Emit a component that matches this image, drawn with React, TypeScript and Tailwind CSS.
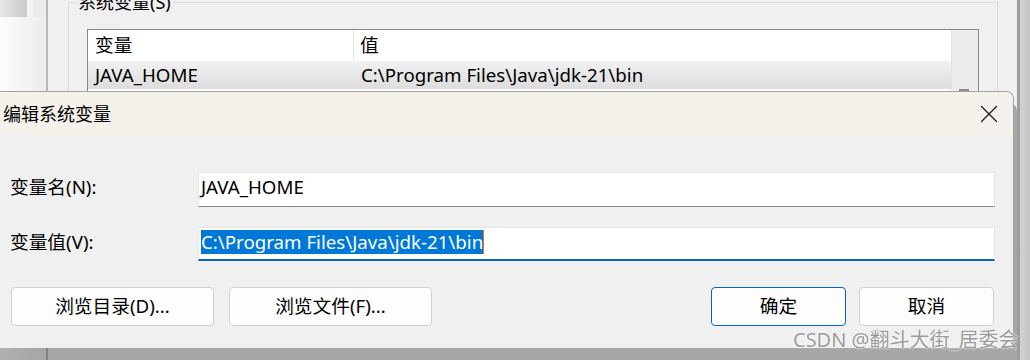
import { X } from "lucide-react";

function EnvList() {
  return (
    <div className="ml-[18px] mt-[15px] flex h-[200px] w-[892px] border border-[#828790] bg-white">
      <div className="flex flex-1 flex-col">
        {/* header */}
        <div className="flex h-[31px] items-center bg-white">
          <div className="flex h-full w-[266px] items-center border-r border-[#e5e5e5] pl-[7px]">变量</div>
          <div className="pl-[6px]">值</div>
        </div>
        {/* row */}
        <div className="flex h-[28px] items-center bg-gradient-to-b from-[#f1f1f1] to-[#dddddd]">
          <div className="w-[266px] pl-[7px]">JAVA_HOME</div>
          <div className="pl-[7px]">C:\Program Files\Java\jdk-21\bin</div>
        </div>
      </div>
      <div className="w-[27px] border-l border-[#e3e3e3] bg-[#ececec]">
        <div className="ml-[7px] mt-[59px] h-[3px] w-[10px] bg-[#8a8a8a]" />
      </div>
    </div>
  );
}

function BackWindow() {
  return (
    <div className="flex h-full w-full">
      {/* left strip */}
      <div className="flex w-[46px] flex-col">
        <div className="flex h-[17px]">
          <div className="w-[27px] bg-gradient-to-r from-[#e6e6e6] to-[#c9c9c9]" />
          <div className="w-[6px] bg-[#f3f3f3]" />
          <div className="flex-1 bg-[#ebebeb]" />
        </div>
        <div className="flex-1 bg-gradient-to-r from-[#fcfcfc] to-[#ececec]" />
      </div>
      <div className="w-[2px] bg-[#b8b8b8]" />

      {/* main panel */}
      <div className="w-[969px] bg-[#f0f0f0] pl-[20px]">
        <fieldset className="-mt-[10px] h-[300px] w-[930px] border border-[#dcdcdc]">
          <legend className="ml-[7px] px-[2px] text-[18px] leading-[24px]">系统变量(S)</legend>
          <EnvList />
        </fieldset>
      </div>

      {/* right edge */}
      <div className="w-[3px] bg-[#9d9d9d]" />
      <div className="flex-1 bg-gradient-to-r from-[#d2d2d2] to-[#c6c6c6]" />
    </div>
  );
}

function Btn({ label, w, primary }: { label: string; w: string; primary?: boolean }) {
  return (
    <button
      className={
        "h-[39px] rounded-[4px] border bg-[#fdfdfd] text-black " +
        w +
        (primary ? " border-[#0067c0]" : " border-[#d1d1d1]")
      }
    >
      {label}
    </button>
  );
}

function EditDialog() {
  return (
    <div className="absolute left-[-30px] top-[91px] flex h-[257px] w-[1044px] flex-col overflow-hidden rounded-tr-[8px] border-r border-t border-[#a3a3a3] bg-[#f0f0f0] shadow-[3px_12px_0_0_rgba(0,0,0,0.3)]">
      {/* title bar */}
      <div className="flex h-[44px] items-center justify-between bg-[#f3f1ea] pl-[33px] pr-[9px]">
        <span className="text-[18px]">编辑系统变量</span>
        <X size={30} strokeWidth={1} className="text-[#1a1a1a]" />
      </div>

      {/* body */}
      <div className="flex flex-1 flex-col pl-[40px] pr-[18px] pt-[36px]">
        <div className="flex h-[35px] items-center">
          <label className="w-[188px] pb-[4px]">变量名(N):</label>
          <div className="flex h-full flex-1 items-center border border-[#e6e6e6] border-b-[#878787] bg-white pb-[4px] pl-[2px]">
            JAVA_HOME
          </div>
        </div>

        <div className="mt-[20px] flex h-[34px] items-center">
          <label className="w-[188px] pb-[4px]">变量值(V):</label>
          <div className="flex h-full flex-1 items-center border border-[#e6e6e6] border-b-2 border-b-[#0067c0] bg-white pb-[3px] pl-[2px]">
            <span className="border-r border-[#e07020] bg-[#0078d7] leading-[24px] text-white">
              C:\Program Files\Java\jdk-21\bin
            </span>
          </div>
        </div>

        <div className="mt-[26px] flex pl-[1px] pr-[1px]">
          <Btn label="浏览目录(D)..." w="w-[203px]" />
          <div className="w-[15px]" />
          <Btn label="浏览文件(F)..." w="w-[203px]" />
          <div className="flex-1" />
          <Btn label="确定" w="w-[135px]" primary />
          <div className="w-[13px]" />
          <Btn label="取消" w="w-[135px]" />
        </div>
      </div>
    </div>
  );
}

export default function App() {
  return (
    <div className="relative h-[360px] w-[1030px] overflow-hidden bg-[#d6d6d6] font-['Noto_Sans','Noto_Sans_CJK_SC',sans-serif] text-[18.7px] text-black">
      <BackWindow />
      <EditDialog />
      <div className="absolute left-[793px] top-[326px] text-[20px] leading-[28px] text-[#9c9c9c] [text-shadow:0_0_2px_#fff,0_0_1px_#fff]">
        CSDN @翻斗大街_居委会
      </div>
    </div>
  );
}
